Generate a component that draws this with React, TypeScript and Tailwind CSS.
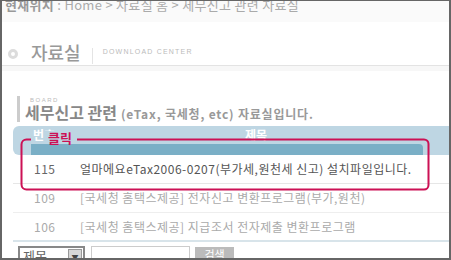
import React from "react";

const KR = { fontFamily: '"Noto Sans CJK KR", "Noto Sans", sans-serif' };

export default function App() {
  return (
    <div
      className="relative w-[451px] h-[260px] overflow-hidden bg-white border-t border-l-2 border-r-2 border-b-2 border-[#666]"
      style={KR}
    >
      {/* breadcrumb */}
      <div className="h-[21px] bg-[#fafafa] pl-[3px] overflow-hidden">
        <div className="-mt-[3px] text-[13px] leading-[14px] tracking-[0.3px] text-[#aaa] whitespace-nowrap">
          <span className="font-bold text-[#999]">현재위치</span> : Home &gt; 자료실 홈 &gt; 세무신고 관련 자료실
        </div>
      </div>

      {/* title area */}
      <div className="h-[43px] flex items-end pb-[3px]">
        <div className="ml-[6px] mb-[3px] w-[10px] h-[10px] rounded-full border-[3px] border-[#dcdcdc] bg-white" />
        <div className="ml-[13px] text-[18px] leading-[20px] text-[#999] font-medium">자료실</div>
        <div className="ml-[11px] w-px h-[16px] bg-[#e4e4e4] mb-[-2px]" />
        <div
          className="ml-[10px] mb-[6px] text-[7px] leading-[8px] tracking-[1.2px] text-[#bbb]"
          style={{ fontFamily: '"Liberation Sans", sans-serif' }}
        >
          DOWNLOAD CENTER
        </div>
      </div>
      <div className="h-px bg-[#e3e3e3]" />
      <div className="h-[5px] bg-[#f7f7f7]" />

      {/* board title */}
      <div className="mt-[25px] flex h-[26px]">
        <div className="ml-[15px] w-[3px] h-[26px] bg-[#cccccc]" />
        <div className="ml-[5px] flex flex-col">
          <div
            className="ml-[5px] text-[6px] leading-[6px] tracking-[1.5px] text-[#bbb] mt-[1px]"
            style={{ fontFamily: '"Liberation Sans", sans-serif' }}
          >
            BOARD
          </div>
          <div className="flex items-baseline h-[19px] whitespace-nowrap">
            <span className="text-[16px] leading-[19px] font-bold text-[#888]">세무신고 관련</span>
            <span className="ml-[4px] text-[12px] leading-[19px] tracking-[0.8px] font-bold text-[#999]">
              (eTax, 국세청, etc) 자료실입니다.
            </span>
          </div>
        </div>
      </div>

      {/* table */}
      <div className="mt-[4px] ml-[11px]">
        <div className="h-[29px] bg-[#bed6e3] rounded-l-[6px] flex flex-col">
          <div className="h-[18px] flex items-center text-[12px] font-bold text-white">
            <div className="pl-[20px] w-[46px]">번호</div>
            <div className="ml-[186px]">제목</div>
          </div>
          <div className="ml-[18px] w-[392px] h-[11px] bg-[#7aafc6] rounded-tr-[4px]" />
        </div>

        <div className="h-[29px] flex items-center border-b border-[#e6e6e6] text-[12px] tracking-[0.5px] whitespace-nowrap">
          <div className="pl-[21px] w-[67px] text-[#666]">115</div>
          <div className="text-[#555]">얼마에요eTax2006-0207(부가세,원천세 신고) 설치파일입니다.</div>
        </div>
        <div className="h-[29px] flex items-center border-b border-[#eeeeee] text-[12px] tracking-[0.5px] whitespace-nowrap">
          <div className="pl-[21px] w-[67px] text-[#aaa]">109</div>
          <div className="text-[#aaa]">[국세청 홈택스제공] 전자신고 변환프로그램(부가,원천)</div>
        </div>
        <div className="h-[29px] flex items-center border-b-2 border-[#d8e4ea] text-[12px] tracking-[0.5px] whitespace-nowrap">
          <div className="pl-[21px] w-[67px] text-[#aaa]">106</div>
          <div className="text-[#aaa]">[국세청 홈택스제공] 지급조서 전자제출 변환프로그램</div>
        </div>
      </div>

      {/* search row */}
      <div className="mt-[4px] flex items-start">
        <div className="ml-[16px] w-[67px] h-[22px] border-2 border-[#888] flex items-start">
          <div className="pl-[3px] text-[13px] leading-[16px] text-[#666] flex-1">제목</div>
          <div className="mt-[1px] mr-[1px] w-[14px] h-[16px] bg-[#d6d6d6] border border-[#999] flex items-center justify-center text-[7px] text-[#444]">
            ▼
          </div>
        </div>
        <div className="ml-[6px] w-[99px] h-[20px] border border-[#ccc]" />
        <div className="ml-[5px] mt-[1px] w-[39px] h-[20px] bg-[#bbb] text-white text-[11px] leading-[14px] text-center">
          검색
        </div>
      </div>

      {/* annotation overlay */}
      <svg className="absolute left-[-2px] top-[-1px]" width="451" height="260" viewBox="0 0 451 260">
        <path
          d="M31 139.5 L26.5 139.5 A5 5 0 0 0 21.5 144.5 L21.5 184.5 A5 5 0 0 0 26.5 189.5 L424 189.5 A4.5 4.5 0 0 0 428.5 185 L428.5 144 A4.5 4.5 0 0 0 424 139.5 L77 139.5"
          fill="none"
          stroke="#cc1155"
          strokeWidth="2"
        />
      </svg>
      <div className="absolute left-[42px] top-[130px] w-[33px] h-[13px] bg-[#bed6e3] pl-[4px] text-[13px] leading-[14px] font-bold text-[#cc1155]">
        클릭
      </div>
    </div>
  );
}
